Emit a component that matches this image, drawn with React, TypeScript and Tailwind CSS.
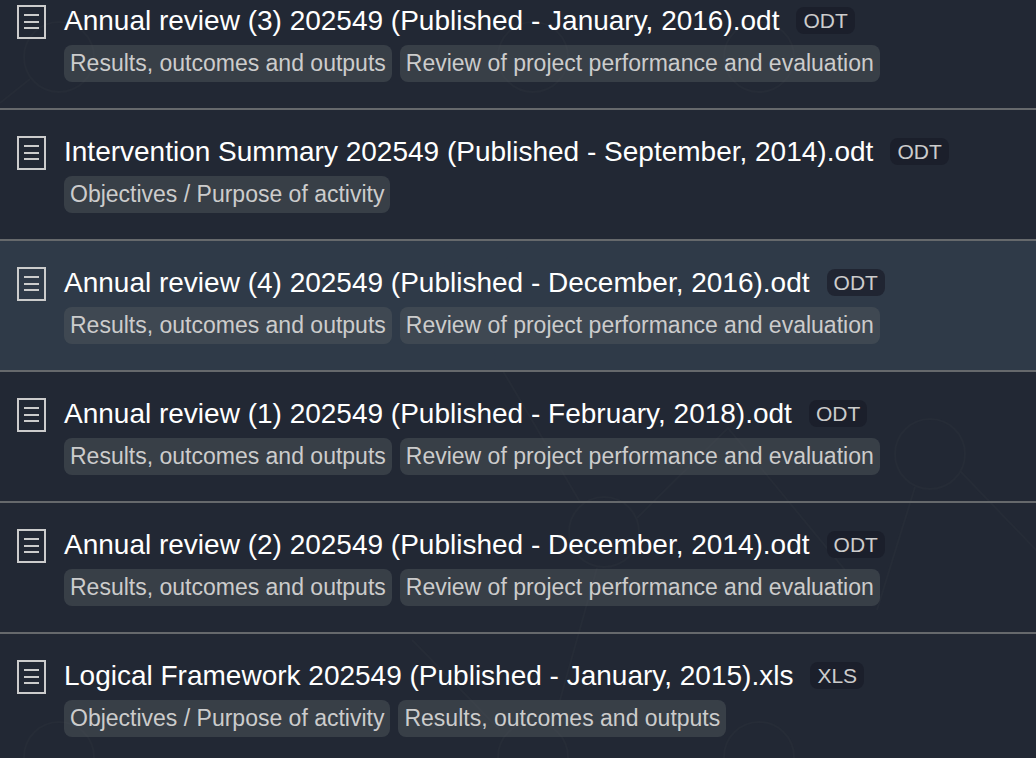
type DocumentEntry = {
  title: string;
  format: string;
  categories: string[];
  active?: boolean;
};

const RESULTS = "Results, outcomes and outputs";
const REVIEW = "Review of project performance and evaluation";
const OBJECTIVES = "Objectives / Purpose of activity";

const documents: DocumentEntry[] = [
  {
    title: "Annual review (3) 202549 (Published - January, 2016).odt",
    format: "ODT",
    categories: [RESULTS, REVIEW],
  },
  {
    title: "Intervention Summary 202549 (Published - September, 2014).odt",
    format: "ODT",
    categories: [OBJECTIVES],
  },
  {
    title: "Annual review (4) 202549 (Published - December, 2016).odt",
    format: "ODT",
    categories: [RESULTS, REVIEW],
    active: true,
  },
  {
    title: "Annual review (1) 202549 (Published - February, 2018).odt",
    format: "ODT",
    categories: [RESULTS, REVIEW],
  },
  {
    title: "Annual review (2) 202549 (Published - December, 2014).odt",
    format: "ODT",
    categories: [RESULTS, REVIEW],
  },
  {
    title: "Logical Framework 202549 (Published - January, 2015).xls",
    format: "XLS",
    categories: [OBJECTIVES, RESULTS],
  },
];

function DocumentIcon() {
  return (
    <svg
      width="29"
      height="34"
      viewBox="0 0 29 34"
      fill="none"
      stroke="#cccccc"
      strokeWidth="2"
      shapeRendering="crispEdges"
      className="shrink-0"
      aria-hidden
    >
      <rect x="1" y="1" width="27" height="32" />
      <path d="M7 10h15M7 17h15M7 23h15" />
    </svg>
  );
}

// Faint circles-and-lines texture behind the list.
function NetworkPattern() {
  return (
    <svg
      className="pointer-events-none absolute inset-0 h-full w-full"
      fill="none"
      stroke="#262c37"
      strokeWidth="2"
      aria-hidden
    >
      <circle cx="59" cy="57" r="35" />
      <circle cx="533" cy="57" r="35" />
      <circle cx="759" cy="57" r="35" />
      <circle cx="456" cy="298" r="35" />
      <circle cx="930" cy="454" r="35" />
      <circle cx="604" cy="532" r="35" />
      <circle cx="59" cy="757" r="35" />
      <circle cx="533" cy="757" r="35" />
      <circle cx="759" cy="757" r="35" />
      <path d="M0 103L30 79M488 275L532 240M483 337L580 502M637 518L728 428L845 570M960 471L1040 554M915 487L877 610M597 568L560 700M412 640L500 730" />
    </svg>
  );
}

function DocumentRow({ doc }: { doc: DocumentEntry }) {
  return (
    <li
      className={`border-b-2 border-[#66696c] ${
        doc.active ? "bg-[#313c4a]/90" : ""
      }`}
    >
      <a href="#" className="flex items-start gap-[18px] px-[17px] py-[26px]">
        <DocumentIcon />
        <div className="min-w-0">
          <div className="flex items-start gap-[17px]">
            <span className="text-[28px] leading-8 text-white">{doc.title}</span>
            <span
              className={`mt-[2px] rounded-lg px-[7px] text-[21px] leading-[27px] text-[#cccccc] ${
                doc.active ? "bg-[#202532]" : "bg-[#1b1f2b]"
              }`}
            >
              {doc.format}
            </span>
          </div>
          <div className="mt-2 flex flex-wrap gap-2">
            {doc.categories.map((category) => (
              <span
                key={category}
                className="rounded-lg bg-[#555b60]/45 px-[6px] text-[23px] leading-[37px] text-[#cccccc]"
              >
                {category}
              </span>
            ))}
          </div>
        </div>
      </a>
    </li>
  );
}

export default function App() {
  return (
    <main className="relative h-screen overflow-hidden bg-[#222834] font-['Liberation_Sans',Arial,sans-serif]">
      <NetworkPattern />
      <ul className="relative -mt-[21px]">
        {documents.map((doc) => (
          <DocumentRow key={doc.title} doc={doc} />
        ))}
      </ul>
    </main>
  );
}
